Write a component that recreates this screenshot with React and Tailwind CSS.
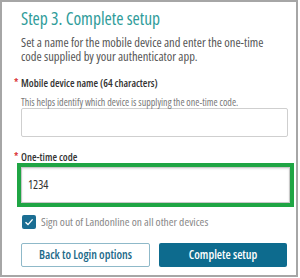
import React from "react";

export default function App() {
  const font = { fontFamily: '"Open Sans", "Noto Sans", sans-serif' };
  return (
    <div style={font} className="w-[300px] h-[278px] bg-white font-stretch-[77%]">
      <div className="w-[298px] h-[277px] border-2 border-[#a6a6a6] bg-white pl-[19px] pr-[8px] pt-[5px]">
        <h1 className="text-[17.5px] leading-[22px] text-[#2f9c9a]">Step 3. Complete setup</h1>
        <p className="mt-[7px] text-[12.5px] leading-[14px] text-[#555] pr-[2px]">
          Set a name for the mobile device and enter the one-time code supplied by your authenticator app.
        </p>
        <div className="relative mt-[13px] text-[10.5px] leading-[12px] font-semibold text-[#333]">
          <span className="absolute -left-[7px] top-[-1px] text-[#d9262b]">*</span>
          Mobile device name (64 characters)
        </div>
        <div className="mt-[8px] text-[10px] leading-[11px] text-[#777]">
          This helps identify which device is supplying the one-time code.
        </div>
        <div className="w-[267px] h-[29px] border border-[#cfcfcf] rounded-[2px]"></div>
        <div className="relative mt-[14px] text-[10.5px] leading-[12px] font-semibold text-[#333]">
          <span className="absolute -left-[7px] top-[-1px] text-[#d9262b]">*</span>
          One-time code
        </div>
        <div className="-ml-[4px] w-[277px] h-[44px] border-[4px] border-[#1fa544]">
          <div className="h-full border border-[#c8c8c8] shadow-[inset_0_1px_2px_rgba(0,0,0,0.12)] flex items-center pl-[6px] text-[12px] text-[#333]">
            1234
          </div>
        </div>
        <div className="mt-[8px] flex items-center gap-[5px]">
          <div className="w-[14px] h-[14px] rounded-[2px] bg-[#1b6e93] flex items-center justify-center ml-[1px]">
            <svg width="10" height="10" viewBox="0 0 10 10">
              <path d="M1.5 5.2 L4 7.6 L8.6 2.4" fill="none" stroke="white" strokeWidth="1.4" />
            </svg>
          </div>
          <span className="text-[11.5px] leading-[14px] text-[#888]">Sign out of Landonline on all other devices</span>
        </div>
        <div className="mt-[14px] flex gap-[9px]">
          <button className="w-[129px] h-[24px] border border-[#8fb9c9] rounded-[2px] text-[12px] font-semibold text-[#1d6a89] bg-white">
            Back to Login options
          </button>
          <button className="w-[128px] h-[24px] rounded-[2px] bg-[#0d6b8e] text-[12px] font-semibold text-white">
            Complete setup
          </button>
        </div>
      </div>
    </div>
  );
}
